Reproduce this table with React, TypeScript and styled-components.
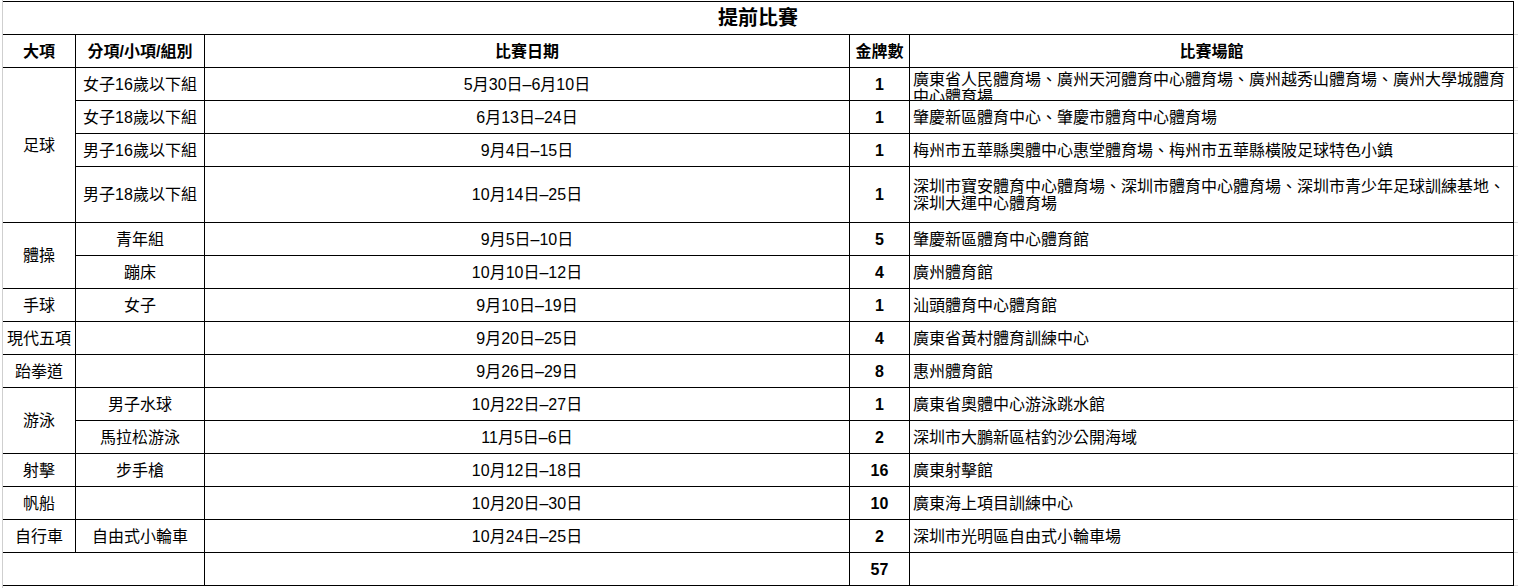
import React from "react";
import styled, { createGlobalStyle } from "styled-components";

const GlobalStyle = createGlobalStyle`
  html, body { margin: 0; padding: 0; background: #fff; }
  body {
    font-family: "Liberation Sans", "Noto Sans CJK TC", sans-serif;
    color: #000;
    overflow: hidden;
  }
`;

type Row = {
  sub: string;
  date: string;
  medals: string;
  venue: string;
  tall?: boolean;
};

type Group = { name: string; rows: Row[] };

const groups: Group[] = [
  {
    name: "足球",
    rows: [
      {
        sub: "女子16歲以下組",
        date: "5月30日–6月10日",
        medals: "1",
        venue:
          "廣東省人民體育場、廣州天河體育中心體育場、廣州越秀山體育場、廣州大學城體育中心體育場",
      },
      {
        sub: "女子18歲以下組",
        date: "6月13日–24日",
        medals: "1",
        venue: "肇慶新區體育中心、肇慶市體育中心體育場",
      },
      {
        sub: "男子16歲以下組",
        date: "9月4日–15日",
        medals: "1",
        venue: "梅州市五華縣奧體中心惠堂體育場、梅州市五華縣橫陂足球特色小鎮",
      },
      {
        sub: "男子18歲以下組",
        date: "10月14日–25日",
        medals: "1",
        venue:
          "深圳市寶安體育中心體育場、深圳市體育中心體育場、深圳市青少年足球訓練基地、深圳大運中心體育場",
        tall: true,
      },
    ],
  },
  {
    name: "體操",
    rows: [
      { sub: "青年組", date: "9月5日–10日", medals: "5", venue: "肇慶新區體育中心體育館" },
      { sub: "蹦床", date: "10月10日–12日", medals: "4", venue: "廣州體育館" },
    ],
  },
  {
    name: "手球",
    rows: [{ sub: "女子", date: "9月10日–19日", medals: "1", venue: "汕頭體育中心體育館" }],
  },
  {
    name: "現代五項",
    rows: [{ sub: "", date: "9月20日–25日", medals: "4", venue: "廣東省黃村體育訓練中心" }],
  },
  {
    name: "跆拳道",
    rows: [{ sub: "", date: "9月26日–29日", medals: "8", venue: "惠州體育館" }],
  },
  {
    name: "游泳",
    rows: [
      { sub: "男子水球", date: "10月22日–27日", medals: "1", venue: "廣東省奧體中心游泳跳水館" },
      { sub: "馬拉松游泳", date: "11月5日–6日", medals: "2", venue: "深圳市大鵬新區桔釣沙公開海域" },
    ],
  },
  {
    name: "射擊",
    rows: [{ sub: "步手槍", date: "10月12日–18日", medals: "16", venue: "廣東射擊館" }],
  },
  {
    name: "帆船",
    rows: [{ sub: "", date: "10月20日–30日", medals: "10", venue: "廣東海上項目訓練中心" }],
  },
  {
    name: "自行車",
    rows: [{ sub: "自由式小輪車", date: "10月24日–25日", medals: "2", venue: "深圳市光明區自由式小輪車場" }],
  },
];

const ROW_H = 32;
const TALL_H = 55;

const dataRows = groups.flatMap((g) => g.rows);
const rowHeights = [ROW_H, ROW_H, ...dataRows.map((r) => (r.tall ? TALL_H : ROW_H)), ROW_H];
const rowTemplate = rowHeights.map((h) => `${h}px`).join(" ");

const Page = styled.div`
  display: flex;
  align-items: flex-start;
  min-height: 100vh;
`;

const LeftGridline = styled.div`
  align-self: stretch;
  width: 1px;
  margin-left: 2px;
  background: #cfcfcf;
`;

const Sheet = styled.div`
  margin-top: 1px;
  display: grid;
  grid-template-columns: 72px 128px 644px 59px 603px;
  grid-template-rows: ${rowTemplate};
  gap: 1px;
  background: #000;
  padding: 1px 1px 1px 0;
`;

const Gutter = styled.div`
  margin-top: 1px;
  width: 4px;
  display: grid;
  grid-template-rows: ${rowTemplate};
  gap: 1px;
  background: #d6d6d6;
  border-top: 1px solid #fff;
  padding-bottom: 1px;
`;

const GutterCell = styled.div`
  background: #fff;
`;

const Cell = styled.div<{
  $col: number;
  $row: number;
  $colSpan?: number;
  $rowSpan?: number;
  $align?: "left" | "center";
  $bold?: boolean;
}>`
  grid-column: ${(p) => p.$col} / span ${(p) => p.$colSpan ?? 1};
  grid-row: ${(p) => p.$row} / span ${(p) => p.$rowSpan ?? 1};
  background: #fff;
  display: flex;
  flex-direction: column;
  justify-content: safe center;
  align-items: ${(p) => (p.$align === "left" ? "flex-start" : "center")};
  text-align: ${(p) => p.$align ?? "center"};
  padding: ${(p) => (p.$align === "left" ? "3px 0 3px 3px" : "0")};
  overflow: hidden;
  font-size: 16px;
  line-height: 17px;
  font-weight: ${(p) => (p.$bold ? 700 : 400)};
  white-space: ${(p) => (p.$align === "left" ? "normal" : "nowrap")};
`;

const TitleCell = styled(Cell)`
  font-size: 20px;
  line-height: 24px;
  font-weight: 700;
`;

export default function App() {
  const cells: React.ReactNode[] = [];
  let r = 3;
  groups.forEach((g, gi) => {
    cells.push(
      <Cell key={`g${gi}`} $col={1} $row={r} $rowSpan={g.rows.length}>
        {g.name}
      </Cell>
    );
    g.rows.forEach((row, ri) => {
      const rr = r + ri;
      cells.push(
        <Cell key={`s${gi}-${ri}`} $col={2} $row={rr}>
          {row.sub}
        </Cell>,
        <Cell key={`d${gi}-${ri}`} $col={3} $row={rr}>
          {row.date}
        </Cell>,
        <Cell key={`m${gi}-${ri}`} $col={4} $row={rr} $bold>
          {row.medals}
        </Cell>,
        <Cell key={`v${gi}-${ri}`} $col={5} $row={rr} $align="left">
          {row.venue}
        </Cell>
      );
    });
    r += g.rows.length;
  });

  return (
    <>
      <GlobalStyle />
      <Page>
        <LeftGridline />
        <Sheet>
          <TitleCell $col={1} $row={1} $colSpan={5}>
            提前比賽
          </TitleCell>
          <Cell $col={1} $row={2} $bold>大項</Cell>
          <Cell $col={2} $row={2} $bold>分項/小項/組別</Cell>
          <Cell $col={3} $row={2} $bold>比賽日期</Cell>
          <Cell $col={4} $row={2} $bold>金牌數</Cell>
          <Cell $col={5} $row={2} $bold>比賽場館</Cell>
          {cells}
          <Cell $col={1} $row={r} $colSpan={2} />
          <Cell $col={3} $row={r} />
          <Cell $col={4} $row={r} $bold>57</Cell>
          <Cell $col={5} $row={r} $align="left" />
        </Sheet>
        <Gutter>
          {rowHeights.map((_, i) => (
            <GutterCell key={i} />
          ))}
        </Gutter>
      </Page>
    </>
  );
}
